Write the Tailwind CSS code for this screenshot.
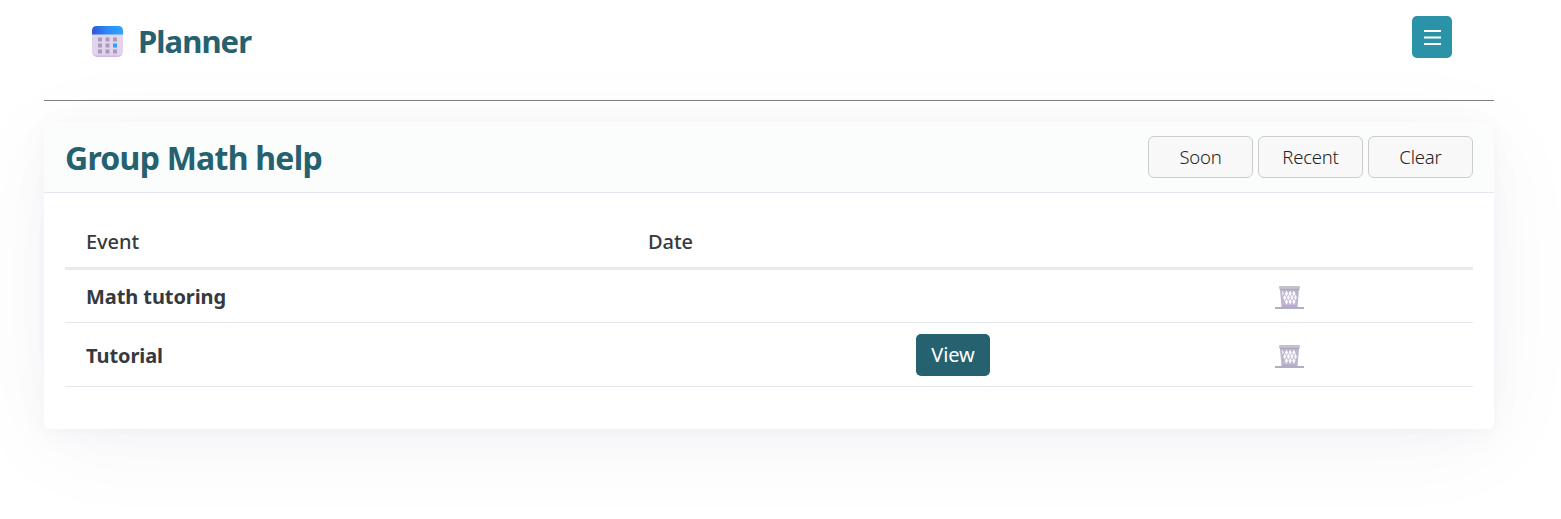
<!DOCTYPE html>
<html lang="en">
<head>
<meta charset="utf-8">
<title>Planner</title>
<script src="https://cdn.jsdelivr.net/npm/@tailwindcss/browser@4"></script>
</head>
<body class="h-[519px] overflow-hidden bg-white px-11 pr-[67px] font-['Segoe_UI','Noto_Sans',sans-serif] text-[#343a40]">
<svg class="absolute h-0 w-0" aria-hidden="true">
  <defs>
    <linearGradient id="top" x1="0" x2="1"><stop offset="0" stop-color="#2f56dc"/><stop offset=".5" stop-color="#2b8bf8"/><stop offset="1" stop-color="#2fa4fc"/></linearGradient>
    <linearGradient id="page" x1="0" x2="0" y1="0" y2="1"><stop offset="0" stop-color="#dfd6ed"/><stop offset=".9" stop-color="#e2d3ef"/><stop offset="1" stop-color="#cfb0e6"/></linearGradient>
    <linearGradient id="bin" x1="0" x2="0" y1="0" y2="1"><stop offset="0" stop-color="#b9b4c8"/><stop offset="1" stop-color="#c2b7d6"/></linearGradient>
    <symbol id="trash" viewBox="0 0 29 24">
      <path d="M5 3H24L22.500 22H6.500Z" fill="url(#bin)"/>
      <path d="M4 .5Q4 0 5 0H24Q25 0 25 .5V2.500H4Z" fill="#c5c2cc"/>
      <path d="M4.500 2.500H24.500V3.600H4.500Z" fill="#a49db5"/>
      <path d="M7 4.500l1.800 2.700L7.500 10zM11.500 4.500l1.600 3-1.600 3-1.600-3zM15.200 4.500l1.600 3-1.600 3-1.600-3zM18.900 4.500l1.600 3-1.600 3-1.600-3zM9.700 8.600l1.600 3-1.600 3-1.600-3zM13.400 8.600l1.600 3-1.600 3-1.600-3zM17 8.600l1.600 3-1.600 3-1.600-3zM20.600 8.600l1.200 3-1.200 3-1.400-3zM11.500 12.800l1.600 3-1.600 3-1.600-3zM15.200 12.800l1.600 3-1.600 3-1.600-3zM18.900 12.800l1.600 3-1.600 3-1.600-3z" fill="#fbf9fd"/>
      <path d="M7 19.500H22L21.800 21.500H7.200Z" fill="#b5a7cf"/>
      <path d="M0 21H29V23H0Z" fill="#adb0c2"/>
    </symbol>
  </defs>
</svg>
<header class="flex h-[101px] items-start justify-between border-b border-[#808080] pr-[42px] pl-12">
  <div class="flex items-center pt-[19px]">
    <svg class="mt-[2px] h-8 w-8" viewBox="0 0 32 32">
      <rect x="0" y="0" width="31" height="31" rx="5" fill="url(#page)"/>
      <path d="M0 8.500V5Q0 0 5 0H26Q31 0 31 5V8.500Z" fill="url(#top)"/>
      <path d="M6 11.500h4v4H6zm7.500 0h4v4h-4zm7.500 0h4v4h-4zM6 17.500h4v4H6zm7.500 0h4v4h-4zM6 23.500h4v4H6zm7.500 0h4v4h-4zm7.500 0h4v4h-4z" fill="#a99bb5"/>
      <path d="M21 17.500h4v4h-4z" fill="#309ffb"/>
    </svg>
    <h1 class="ml-[14px] text-[31px] leading-[44px] font-bold tracking-[-0.95px] text-[#26616f]">Planner</h1>
  </div>
  <button class="mt-4 flex h-[42px] w-10 items-center justify-center rounded-[5px] bg-[#2b93a7]" aria-label="Menu">
    <svg class="mt-px h-[15px] w-[17px]" viewBox="0 0 17 15" fill="#fff"><path d="M0 0h17v2H0zM0 6.500h17v2H0zM0 13h17v2H0z"/></svg>
  </button>
</header>
<main class="mt-[21px] h-[307px] rounded-md bg-white shadow-[0_14px_100px_rgba(20,20,110,0.045),0_6px_36px_rgba(20,20,110,0.03),0_2px_10px_rgba(20,20,110,0.02)]">
  <div class="flex h-[71px] items-center justify-between rounded-t-md border-b border-[#e4e6f0] bg-[#fafdfc] px-[21px]">
    <h2 class="pt-[2px] text-[32px] leading-10 font-bold tracking-[-0.75px] text-[#26616f]">Group Math help</h2>
    <div class="flex gap-[5px] text-[18.5px] tracking-[-0.2px] text-[#242424] font-[350]">
      <button class="h-[42px] w-[105px] rounded-md border border-[#ccc] bg-[#f8f8f8]">Soon</button>
      <button class="h-[42px] w-[105px] rounded-md border border-[#ccc] bg-[#f8f8f8]">Recent</button>
      <button class="h-[42px] w-[105px] rounded-md border border-[#ccc] bg-[#f8f8f8]">Clear</button>
    </div>
  </div>
  <div class="px-[21px] pt-[21px] text-[20px] tracking-[-0.08px]">
    <div class="grid h-[56px] grid-cols-[562px_268px_359px_1fr] items-center border-b-[3px] border-[#e8eaef] pt-[2px] pl-[21px] font-medium">
      <div>Event</div><div>Date</div>
    </div>
    <div class="grid h-[53px] grid-cols-[562px_268px_359px_1fr] items-center border-b border-[#e6e7ee] pl-[21px]">
      <div class="pt-[2px] font-bold">Math tutoring</div><div></div><div></div>
      <svg class="mt-[3px] h-6 w-[29px]"><use href="#trash"/></svg>
    </div>
    <div class="grid h-16 grid-cols-[562px_268px_359px_1fr] items-center border-b border-[#e6e7ee] pl-[21px]">
      <div class="pt-[2px] font-bold">Tutorial</div><div></div>
      <button class="h-[42px] w-[74px] rounded-[5px] bg-[#26616f] text-white">View</button>
      <svg class="mt-[5px] h-6 w-[29px]"><use href="#trash"/></svg>
    </div>
  </div>
</main>
</body>
</html>
